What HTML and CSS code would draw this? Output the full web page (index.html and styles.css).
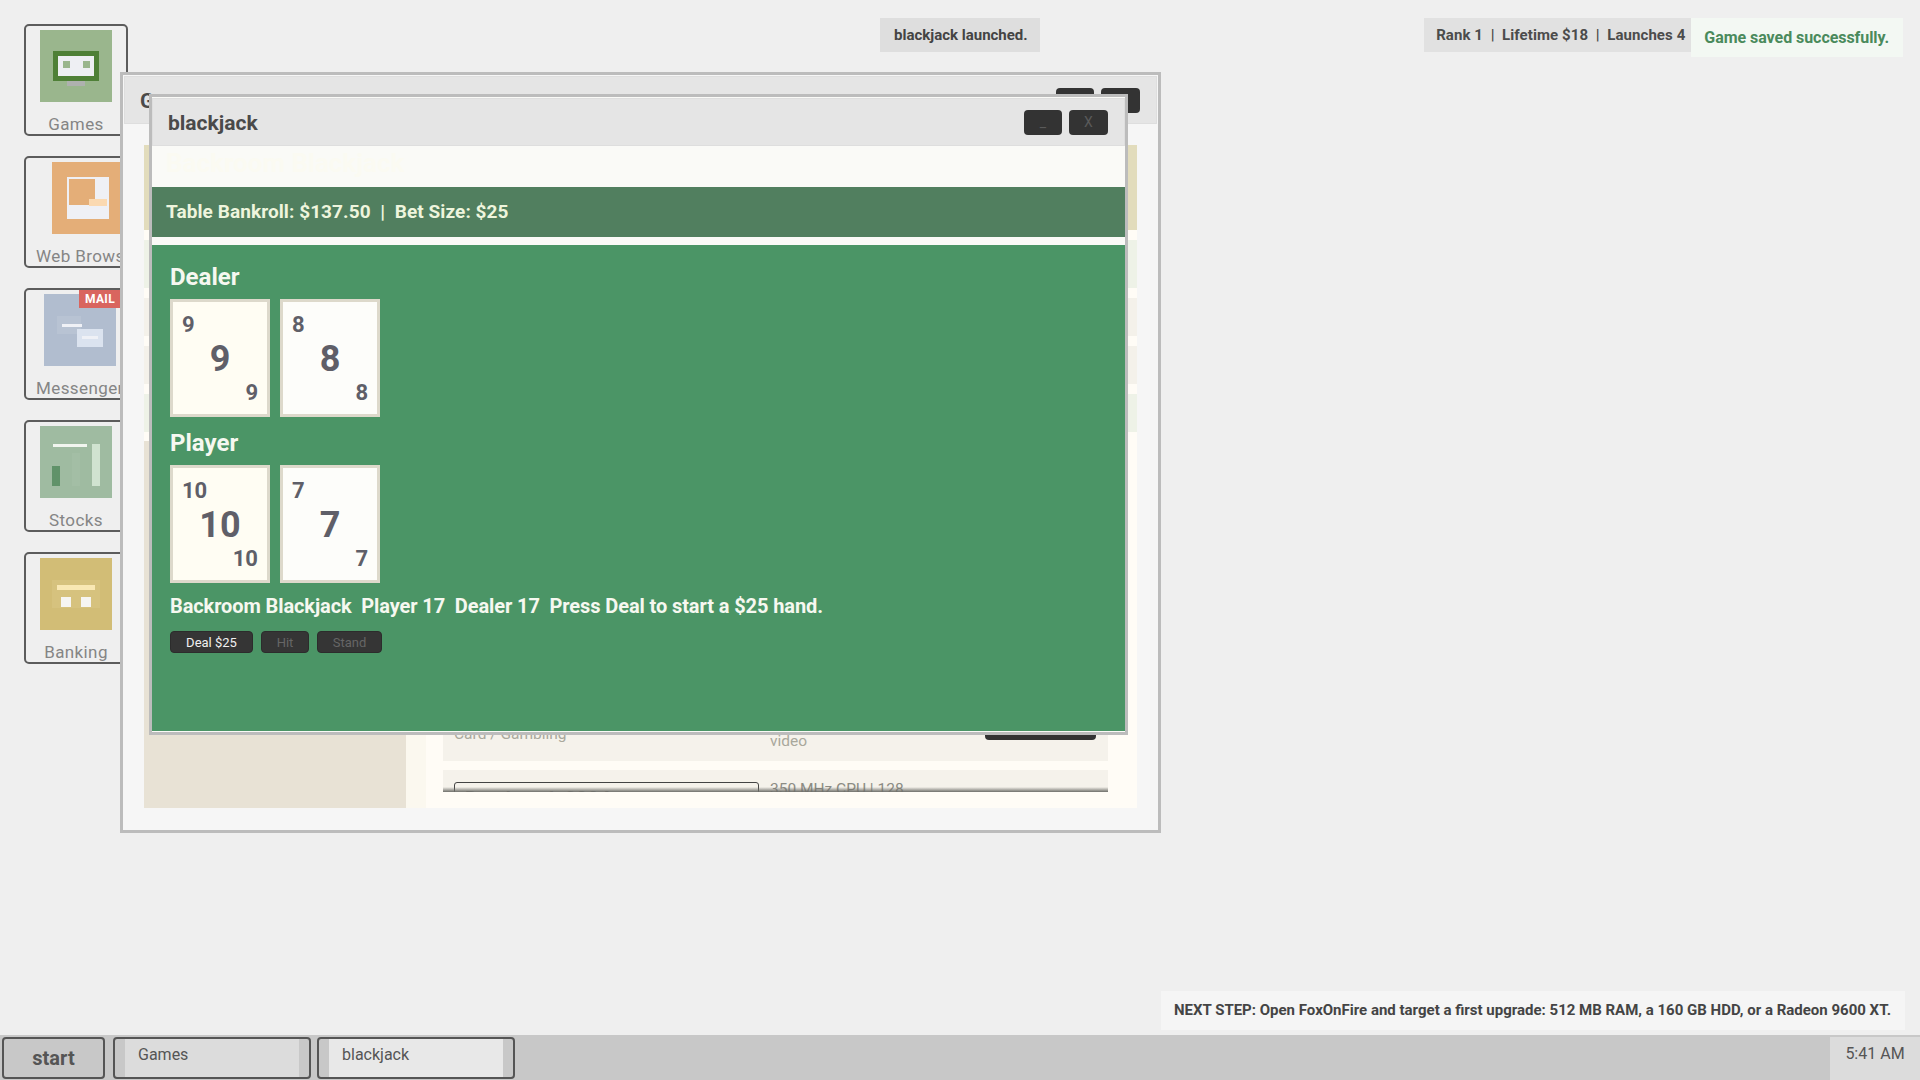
FILE: index.html

```html
<!DOCTYPE html>
<html lang="en">
<head>
  <meta charset="UTF-8">
  <title>Desktop</title>
  <link rel="stylesheet" href="styles.css">
</head>
<body>

  <!-- Desktop icons -->
  <div class="desktop-icons">
    <div class="tile">
      <div class="tile-inner">
        <svg class="tile-icon" width="72" height="72" viewBox="0 0 72 72">
          <rect width="72" height="72" fill="#9ab68d"/>
          <rect x="13" y="21" width="46" height="30" fill="#4f8037"/>
          <rect x="18" y="26" width="36" height="20" fill="#eeeff3"/>
          <rect x="23" y="31" width="7" height="7" fill="#9ab68d"/>
          <rect x="43" y="31" width="7" height="7" fill="#9ab68d"/>
          <rect x="27" y="51" width="18" height="5" fill="#aeb1ae"/>
        </svg>
        <span class="tile-label">Games</span>
      </div>
    </div>
    <div class="tile">
      <div class="tile-inner">
        <svg class="tile-icon" width="72" height="72" viewBox="0 0 72 72">
          <rect width="72" height="72" fill="#e4ae78"/>
          <rect x="15" y="15" width="42" height="42" fill="#eff0f5"/>
          <rect x="17" y="17" width="26" height="26" fill="#e4ae78"/>
          <rect x="37" y="37" width="18" height="7" fill="#fbd9b1"/>
        </svg>
        <span class="tile-label">Web Browser</span>
      </div>
    </div>
    <div class="tile">
      <span class="badge">MAIL</span>
      <div class="tile-inner">
        <svg class="tile-icon" width="72" height="72" viewBox="0 0 72 72">
          <rect width="72" height="72" fill="#b1bdcf"/>
          <rect x="13" y="22" width="24" height="18" fill="#b8c3d3"/>
          <rect x="18" y="30" width="20" height="3" fill="#eff1f6"/>
          <rect x="33" y="35" width="26" height="18" fill="#dbe3ef"/>
          <rect x="38" y="42" width="16" height="3" fill="#eff1f6"/>
        </svg>
        <span class="tile-label">Messenger</span>
      </div>
    </div>
    <div class="tile">
      <div class="tile-inner">
        <svg class="tile-icon" width="72" height="72" viewBox="0 0 72 72">
          <rect width="72" height="72" fill="#9fbba1"/>
          <rect x="32" y="27" width="8" height="33" fill="#a3bea5"/>
          <rect x="13" y="18" width="34" height="3" fill="#f1f5ef"/>
          <rect x="52" y="18" width="8" height="42" fill="#d0e3d0"/>
          <rect x="12" y="40" width="8" height="20" fill="#609269"/>
        </svg>
        <span class="tile-label">Stocks</span>
      </div>
    </div>
    <div class="tile">
      <div class="tile-inner">
        <svg class="tile-icon" width="72" height="72" viewBox="0 0 72 72">
          <rect width="72" height="72" fill="#d2bd76"/>
          <rect x="12" y="22" width="48" height="28" fill="#d6c27e"/>
          <rect x="17" y="27" width="38" height="5" fill="#f9e8b4"/>
          <rect x="21" y="39" width="10" height="10" fill="#f6f5f2"/>
          <rect x="41" y="39" width="10" height="10" fill="#f6f5f2"/>
        </svg>
        <span class="tile-label">Banking</span>
      </div>
    </div>
  </div>

  <!-- Games window, behind -->
  <div class="window window-games">
    <div class="titlebar">
      <span class="window-title">Games</span>
      <div class="window-buttons">
        <button class="win-btn win-btn-min">_</button>
        <button class="win-btn win-btn-close">X</button>
      </div>
    </div>
    <div class="games-body">
      <div class="games-hero"></div>
      <div class="games-strip strip-green"></div>
      <div class="games-strip strip-gray"></div>
      <div class="games-strip strip-gray"></div>
      <div class="games-strip strip-green"></div>
      <div class="games-lower">
        <div class="games-side"></div>
        <div class="games-main">
          <div class="games-list">
            <div class="game-row game-row-first">
              <span class="game-genre">Card / Gambling</span>
              <span class="game-req">video</span>
              <button class="game-launch">Launch</button>
            </div>
            <div class="game-row game-row-cut">
              <div class="game-name">Deadstack 2004</div>
              <span class="game-req-cut">350 MHz CPU | 128</span>
            </div>
          </div>
        </div>
      </div>
    </div>
  </div>

  <!-- Blackjack window -->
  <div class="window window-blackjack">
    <div class="titlebar">
      <span class="window-title">blackjack</span>
      <div class="window-buttons">
        <button class="win-btn win-btn-min">_</button>
        <button class="win-btn win-btn-close">X</button>
      </div>
    </div>
    <div class="bj-body">
      <div class="bj-ghost">Backroom Blackjack</div>
      <div class="bj-banner">Table Bankroll: $137.50 &nbsp;|&nbsp; Bet Size: $25</div>
      <div class="felt">
        <div class="hand-title">Dealer</div>
        <div class="hand">
          <div class="card card-warm">
            <span class="card-top">9</span>
            <span class="card-mid">9</span>
            <span class="card-bottom">9</span>
          </div>
          <div class="card">
            <span class="card-top">8</span>
            <span class="card-mid">8</span>
            <span class="card-bottom">8</span>
          </div>
        </div>
        <div class="hand-title">Player</div>
        <div class="hand">
          <div class="card card-warm">
            <span class="card-top">10</span>
            <span class="card-mid">10</span>
            <span class="card-bottom">10</span>
          </div>
          <div class="card">
            <span class="card-top">7</span>
            <span class="card-mid">7</span>
            <span class="card-bottom">7</span>
          </div>
        </div>
        <div class="status">Backroom Blackjack &nbsp;Player 17 &nbsp;Dealer 17 &nbsp;Press Deal to start a $25 hand.</div>
        <div class="actions">
          <button class="action action-deal">Deal $25</button>
          <button class="action action-hit" disabled>Hit</button>
          <button class="action action-stand" disabled>Stand</button>
        </div>
      </div>
    </div>
  </div>

  <!-- Notices -->
  <div class="notice notice-launch">blackjack launched.</div>
  <div class="top-right">
    <div class="notice-stats">Rank 1 &nbsp;|&nbsp; Lifetime $18 &nbsp;|&nbsp; Launches 4</div>
    <div class="notice-saved">Game saved successfully.</div>
  </div>
  <div class="notice notice-next">NEXT STEP: Open FoxOnFire and target a first upgrade: 512 MB RAM, a 160 GB HDD, or a Radeon 9600 XT.</div>

  <!-- Taskbar -->
  <div class="taskbar">
    <button class="start-button">start</button>
    <div class="task-item"><span class="task-face">Games</span></div>
    <div class="task-item task-item-active"><span class="task-face">blackjack</span></div>
    <div class="clock">5:41 AM</div>
  </div>

</body>
</html>
```

FILE: styles.css

```css
body {
  font-family: Roboto, Arial, sans-serif;
  margin: 0;
  padding: 0;
  height: 100vh;
  overflow: hidden;
  position: relative;
  background-color: #efefef;
  color: #444;
}

button {
  font-family: Roboto, Arial, sans-serif;
  cursor: pointer;
}

/* desktop icons */
.desktop-icons {
  display: flex;
  flex-direction: column;
  gap: 20px;
  padding: 24px 0 0 24px;
}

.tile {
  position: relative;
  box-sizing: border-box;
  width: 104px;
  height: 112px;
  border: 2px solid #5c5c5c;
  border-radius: 5px;
  padding: 4px 0 0 10px;
}

.tile-inner {
  display: inline-flex;
  flex-direction: column;
  align-items: center;
  min-width: 80px;
}

.tile-icon {
  display: block;
}

.tile-label {
  font-size: 17px;
  line-height: 20px;
  margin-top: 12px;
  color: #858585;
  letter-spacing: 0.4px;
  white-space: nowrap;
}

.badge {
  position: absolute;
  top: 0;
  left: 53px;
  width: 42px;
  height: 18px;
  background-color: #d9655f;
  color: #fff;
  font-size: 12px;
  font-weight: 700;
  line-height: 18px;
  text-align: center;
  letter-spacing: 0.3px;
}

/* windows */
.window {
  position: absolute;
  box-sizing: border-box;
  border: 3px solid #bcbcbc;
  background-color: #f6f6f6;
  padding: 1px;
}

.window-games {
  left: 120px;
  top: 72px;
  width: 1041px;
  height: 761px;
}

.window-blackjack {
  left: 149px;
  top: 94px;
  width: 979px;
  height: 641px;
  padding: 1px 0 0;
  background-color: #fafaf7;
}

.titlebar {
  display: flex;
  align-items: center;
  justify-content: space-between;
  box-sizing: border-box;
  height: 48px;
  padding: 0 16px 0 15px;
  background-color: #e5e5e5;
  border: 1px solid #dedede;
}

.window-title {
  font-size: 21px;
  font-weight: 700;
  color: #4a4a4a;
  padding-top: 2px;
}

.window-buttons {
  display: flex;
  gap: 7px;
}

.win-btn {
  height: 25px;
  padding: 0;
  border: none;
  border-radius: 4px;
  background-color: #333;
  color: #5a5a5a;
  font-size: 14px;
}

.win-btn-min {
  width: 38px;
}

.win-btn-close {
  width: 39px;
}

/* games window body, mostly hidden */
.games-body {
  display: flex;
  flex-direction: column;
  height: 663px;
  margin: 21px 20px 0;
  background-color: #fffcf6;
}

.games-hero {
  height: 85px;
  background-color: #e2dcbc;
}

.games-strip {
  height: 38px;
  margin-top: 10px;
}

.strip-green {
  background-color: #eef2e7;
}

.strip-green:nth-child(2) {
  height: 48px;
}

.strip-gray {
  background-color: #f4f1ea;
}

.games-lower {
  flex: 1;
  display: flex;
  margin-top: 9px;
}

.games-side {
  width: 262px;
  background-color: #e8e2d5;
}

.games-main {
  flex: 1;
  border-left: 20px solid #fbf8ef;
  padding-left: 17px;
}

.games-list {
  width: 665px;
  margin-top: 220px;
}

.game-row {
  background-color: #f5f2eb;
}

.game-row-first {
  display: flex;
  align-items: flex-end;
  box-sizing: border-box;
  height: 100px;
  margin-bottom: 9px;
  padding-left: 11px;
  font-size: 15.5px;
  line-height: 18px;
  color: #a9a89c;
}

.game-genre {
  width: 316px;
  margin-bottom: 18px;
}

.game-req {
  flex: 1;
  margin-bottom: 11px;
}

.game-launch {
  width: 111px;
  height: 27px;
  margin: 0 12px 21px 0;
  border: none;
  border-radius: 4px;
  background-color: #333;
  color: #eee;
}

.game-row-cut {
  position: relative;
  display: flex;
  gap: 11px;
  box-sizing: border-box;
  height: 22px;
  padding: 12px 0 0 11px;
  overflow: hidden;
}

/* dark fade where the list scrolls away */
.game-row-cut::after {
  content: "";
  position: absolute;
  left: 0;
  right: 0;
  bottom: 0;
  height: 5px;
  background: linear-gradient(rgba(90, 90, 85, 0), #6f6f6a);
}

.game-name {
  box-sizing: border-box;
  width: 305px;
  height: 40px;
  padding: 4px 10px;
  border: 1px solid #444;
  border-radius: 3px;
  font-size: 20px;
  font-weight: 700;
  color: #666;
}

.game-req-cut {
  margin-top: -2px;
  font-size: 15.5px;
  line-height: 18px;
  color: #8c8c84;
}

/* blackjack */
.bj-body {
  height: 585px;
  display: flex;
  flex-direction: column;
}

.bj-ghost {
  box-sizing: border-box;
  height: 41px;
  padding: 2px 14px;
  font-size: 26px;
  font-weight: 700;
  color: #fbfaf2;
}

.bj-banner {
  box-sizing: border-box;
  height: 50px;
  padding: 0 14px;
  line-height: 50px;
  background-color: #517f5f;
  color: #eef5dd;
  font-size: 19px;
  font-weight: 700;
  letter-spacing: 0.08px;
}

.felt {
  flex: 1;
  margin-top: 8px;
  padding: 17px 18px 0;
  background-color: #4b9566;
}

.hand-title {
  font-size: 24px;
  font-weight: 700;
  line-height: 30px;
  color: #f6f8f0;
}

.hand {
  display: flex;
  gap: 10px;
  margin: 7px 0 11px;
}

.card {
  box-sizing: border-box;
  display: flex;
  flex-direction: column;
  width: 100px;
  height: 118px;
  padding: 10px 9px 8px;
  border: 3px solid #ddd9cb;
  background-color: #fdfdfa;
  color: #5f5f68;
  font-weight: 700;
}

.card-warm {
  background-color: #fffdf3;
}

.card-top,
.card-bottom {
  font-size: 22px;
  line-height: 26px;
}

.card-mid {
  font-size: 36px;
  line-height: 42px;
  text-align: center;
}

.card-bottom {
  text-align: right;
}

.status {
  font-size: 20px;
  font-weight: 700;
  line-height: 24px;
  letter-spacing: -0.1px;
  color: #f6f8f0;
}

.actions {
  display: flex;
  gap: 8px;
  margin-top: 13px;
}

.action {
  height: 22px;
  padding: 0;
  border: 1px solid #2c2c2c;
  border-radius: 4px;
  background-color: #353535;
  font-size: 13px;
}

.action-deal {
  width: 83px;
  color: #f0f0f0;
}

.action-hit {
  width: 48px;
  color: #666;
}

.action-stand {
  width: 65px;
  color: #666;
}

/* notices */
.notice {
  position: absolute;
  font-size: 15px;
  font-weight: 700;
}

.notice-launch {
  left: 880px;
  top: 18px;
  padding: 0 12px 0 14px;
  line-height: 34px;
  background-color: #dedede;
  color: #444;
}

.top-right {
  position: absolute;
  top: 18px;
  right: 17px;
  display: flex;
  align-items: flex-start;
}

.notice-stats {
  padding: 0 6px 0 12px;
  line-height: 34px;
  font-size: 15px;
  font-weight: 700;
  letter-spacing: 0.08px;
  background-color: #e1e1e1;
  color: #4c4c4c;
}

.notice-saved {
  padding: 0 14px 0 13px;
  line-height: 39px;
  font-size: 16px;
  font-weight: 700;
  letter-spacing: -0.05px;
  background-color: #f3f8f3;
  color: #4a8a5c;
}

.notice-next {
  right: 15px;
  top: 991px;
  padding: 0 14px 0 13px;
  line-height: 39px;
  background-color: #f5f5f5;
  color: #444;
}

/* taskbar */
.taskbar {
  position: absolute;
  left: 0;
  right: 0;
  bottom: 0;
  height: 45px;
  display: flex;
  align-items: flex-start;
  box-sizing: border-box;
  padding: 2px 0 0 2px;
  background-color: #c8c8c8;
}

.start-button {
  box-sizing: border-box;
  width: 103px;
  height: 42px;
  margin-right: 8px;
  border: 2px solid #555;
  border-radius: 4px;
  background-color: #c8c8c8;
  color: #555;
  font-size: 20px;
  font-weight: 700;
  padding: 0;
}

.task-item {
  box-sizing: border-box;
  display: flex;
  width: 198px;
  height: 42px;
  margin-right: 6px;
  padding: 0 10px;
  border: 2px solid #555;
  border-radius: 4px;
}

.task-face {
  flex: 1;
  padding: 4px 0 0 13px;
  background-color: #dcdcdc;
  color: #555;
  font-size: 16px;
  line-height: 24px;
}

.task-item-active .task-face {
  background-color: #e8e8e8;
}

.clock {
  margin-left: auto;
  box-sizing: border-box;
  width: 90px;
  height: 43px;
  line-height: 34px;
  text-align: center;
  background-color: #dcdcdc;
  color: #555;
  font-size: 16px;
}
```
